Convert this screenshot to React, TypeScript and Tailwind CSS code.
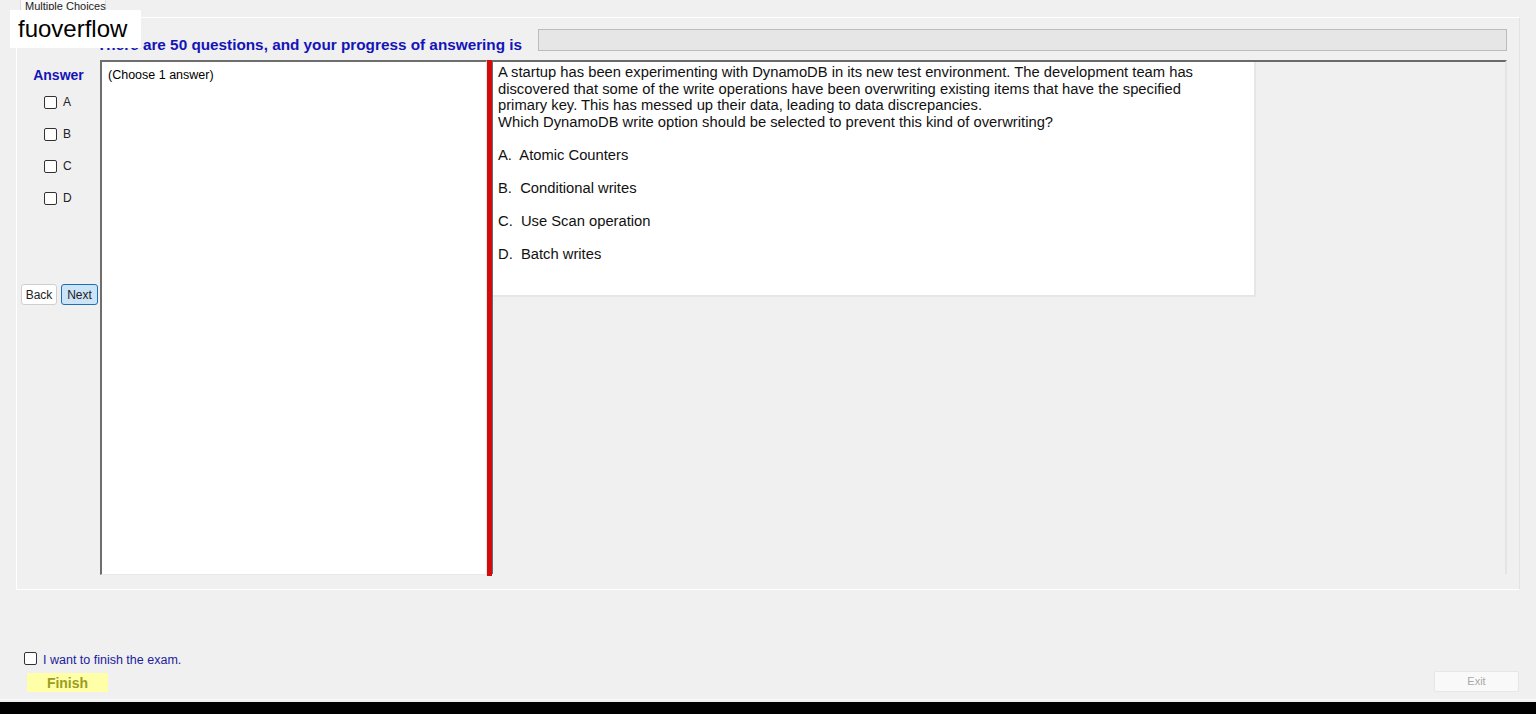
const question = [
  "A startup has been experimenting with DynamoDB in its new test environment. The development team has",
  "discovered that some of the write operations have been overwriting existing items that have the specified",
  "primary key. This has messed up their data, leading to data discrepancies.",
  "Which DynamoDB write option should be selected to prevent this kind of overwriting?",
] as const;

const options = ["A.  Atomic Counters", "B.  Conditional writes", "C.  Use Scan operation", "D.  Batch writes"] as const;

function Box() {
  return <span className="block h-[13px] w-[13px] rounded-[2px] border border-[#333] bg-white" />;
}

export default function App() {
  return (
    <div
      className="relative flex h-[714px] w-[1536px] flex-col overflow-hidden bg-[#f0f0f0] text-black"
      style={{ fontFamily: '"Liberation Sans", Arial, sans-serif' }}
    >
      {/* tab header */}
      <div className="flex h-[17px] pl-[20px]">
        <div className="h-[17px] w-[86px] border-x border-[#dcdcdc] bg-[#f9f9f9] px-[4px] text-[11px] leading-[12px] whitespace-nowrap text-[#222]">
          Multiple Choices
        </div>
      </div>

      {/* tab page */}
      <div className="mx-[16px] flex h-[573px] flex-col border border-white border-r-[#e3e3e3] border-b-white pt-[11px] pb-[14px]">
        <div className="flex h-[22px] items-center pr-[12px]">
          <div className="w-[521px] pl-[80px] pt-[9px] text-[15.3px] leading-[16px] font-bold whitespace-nowrap text-[#1414b8]">
            There are 50 questions, and your progress of answering is
          </div>
          <div className="h-[22px] flex-1 border border-[#bcbcbc] bg-[#e6e6e6]" />
        </div>

        <div className="mt-[9px] flex flex-1 pr-[12px]">
          {/* answer column */}
          <div className="flex w-[83px] flex-col">
            <div className="mt-[7px] text-center text-[14px] font-bold leading-[16px] text-[#1414b8]">Answer</div>
            <div className="mt-[11px] flex flex-col gap-[16px] pl-[27px]">
              {["A", "B", "C", "D"].map((l) => (
                <div key={l} className="flex h-[16px] items-center gap-[6px] text-[12px] text-[#222]">
                  <Box />
                  <span>{l}</span>
                </div>
              ))}
            </div>
            <div className="mt-[78px] flex gap-[4px] pl-[4px]">
              <button className="h-[21px] w-[36px] rounded-[3px] border border-[#cfcfcf] bg-white text-[12px] text-[#222]">
                Back
              </button>
              <button className="h-[21px] w-[37px] rounded-[3px] border border-[#1f6fb5] bg-[#cce4f7] text-[12px] text-[#222]">
                Next
              </button>
            </div>
          </div>

          {/* left text box */}
          <div className="h-[515px] w-[387px] border-t-2 border-l-2 border-[#6e6e6e] border-r border-b border-r-[#e8e8e8] border-b-[#e8e8e8] bg-white pl-[6px] pt-[6px] text-[12.5px] leading-[14px]">
            (Choose 1 answer)
          </div>

          {/* splitter */}
          <div className="h-[516px] w-[5px] bg-[#d40b0b]" />

          {/* right panel */}
          <div className="flex h-[514px] flex-1 border-t-2 border-l border-[#6a6a6a] border-r-2 border-r-[#e4e4e4] bg-[#f0f0f0]">
            <div className="h-[235px] w-[763px] border-r-2 border-b-2 border-[#e6e6e6] bg-white pl-[5px] pt-[2px] text-[14.75px] leading-[16.5px] whitespace-pre text-[#111]">
              {question.map((q) => (
                <div key={q}>{q}</div>
              ))}
              {options.map((o) => (
                <div key={o} className="mt-[16.5px]">
                  {o}
                </div>
              ))}
            </div>
          </div>
        </div>
      </div>

      {/* bottom area */}
      <div className="flex flex-1 flex-col">
        <div className="mt-[62px] flex h-[13px] items-center gap-[6px] pl-[24px]">
          <Box />
          <span className="pt-[3px] text-[12.5px] leading-[13px] text-[#1c1c9c]">I want to finish the exam.</span>
        </div>
        <div className="mt-[6px] flex items-end justify-between pr-[17px] pl-[27px]">
          <button className="h-[19px] w-[81px] rounded-[2px] bg-[#ffffa8] text-[14px] font-bold text-[#9c9c22]">Finish</button>
          <button className="h-[21px] w-[85px] rounded-[2px] border border-[#e6e6e6] bg-[#f9f9f9] text-[11px] text-[#a8a8a8]">
            Exit
          </button>
        </div>
        <div className="mt-auto flex h-[3px] items-start">
          <div className="h-[1px] w-full bg-[#fbfbfb]" />
        </div>
      </div>
      <div className="h-[12px] bg-black" />

      {/* watermark */}
      <div className="absolute top-[10px] left-[10px] flex h-[38px] w-[131px] items-center bg-white pl-[8px] text-[24px] text-black">
        fuoverflow
      </div>
    </div>
  );
}
